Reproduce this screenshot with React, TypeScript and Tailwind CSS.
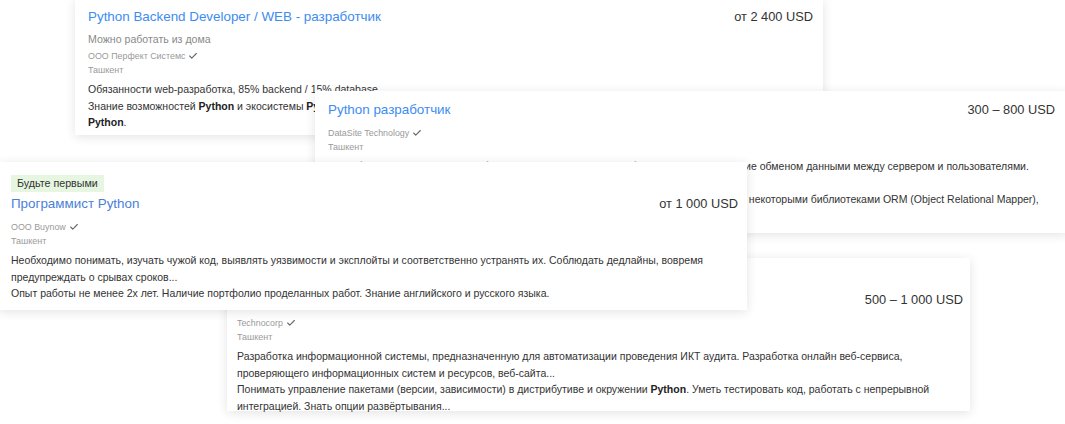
import type { ReactNode } from "react";
import { Check } from "lucide-react";

const FONT = "font-['Liberation_Sans',Arial,sans-serif]";

interface VacancyCardProps {
  className: string;
  title: string;
  titleColor?: string;
  salary: string;
  company: string;
  badge?: boolean;
  remote?: boolean;
  children: ReactNode;
}

function B({ children }: { children: ReactNode }) {
  return <b className="font-bold text-[#222]">{children}</b>;
}

function VacancyCard({
  className,
  title,
  titleColor = "text-[#3d8cf0]",
  salary,
  company,
  badge,
  remote,
  children,
}: VacancyCardProps) {
  return (
    <div className={`absolute bg-white pt-[10px] shadow-[0_2px_10px_rgba(0,0,0,0.11)] ${className}`}>
      {badge && (
        <div className="mt-[3px] w-fit bg-[#e6f6e0] px-[6px] text-[10.7px] leading-[17px] text-[#333]">
          Будьте первыми
        </div>
      )}
      <div className={`flex items-start justify-between ${badge ? "mt-[3px]" : ""}`}>
        <a className={`text-[13.4px] leading-[18px] ${titleColor}`}>{title}</a>
        <span className="whitespace-nowrap text-[12.8px] leading-[18px] text-[#333]">{salary}</span>
      </div>
      {remote && (
        <div className="mt-[5px] text-[10.6px] leading-[16px] text-[#8a8a8a]">Можно работать из дома</div>
      )}
      <div
        className={`${remote ? "mt-[2px]" : "mt-[7px]"} flex items-center gap-[3px] text-[8.9px] leading-[14px] text-[#9a9a9a]`}
      >
        {company}
        <Check size={10} strokeWidth={2.6} className="text-[#666]" />
      </div>
      <div className="text-[9px] leading-[14px] text-[#9a9a9a]">Ташкент</div>
      <div className="mt-[4px] text-[10.5px] leading-[16.5px] text-[#333]">{children}</div>
    </div>
  );
}

export default function App() {
  return (
    <div className={`relative h-[424px] w-[1065px] overflow-hidden bg-white ${FONT}`}>
      <VacancyCard
        className="left-[75px] top-[-2px] w-[748px] pl-[13px] pr-[10px] pb-[4px]"
        title="Python Backend Developer / WEB - разработчик"
        salary="от 2 400 USD"
        company="ООО Перфект Системс"
        remote
      >
        <p>Обязанности web-разработка, 85% backend / 15% database</p>
        <p>
          Знание возможностей <B>Python</B> и экосистемы <B>Python</B> (Django, FastAPI, Celery, SQLAlchemy), опыт
          написания тестов и документации на
          <br />
          <B>Python</B>.
        </p>
      </VacancyCard>

      <VacancyCard
        className="left-[315px] top-[91px] w-[753px] pl-[13px] pr-[13px] pb-[9px]"
        title="Python разработчик"
        salary="300 – 800 USD"
        company="DataSite Technology"
      >
        <p>
          Разработка серверной части веб-сервисов на языке Python, обеспечение и управление обменом данными между
          сервером и пользователями.
          <br />
          Интеграция с внешними сервисами и API.
        </p>
        <p>
          Опыт работы с фреймворками Django/FastAPI, знание SQL и MongoDB, знакомство с некоторыми библиотеками ORM
          (Object Relational Mapper),
          <br />
          навыки работы с Git.
        </p>
      </VacancyCard>

      <VacancyCard
        className="left-[227px] top-[258px] h-[153px] w-[743px] pl-[10px] pr-[7px]"
        title="Junior Python Developer"
        salary="500 – 1 000 USD"
        company="Technocorp"
        badge
      >
        <p>
          Разработка информационной системы, предназначенную для автоматизации проведения ИКТ аудита. Разработка
          онлайн веб-сервиса, проверяющего информационных систем и ресурсов, веб-сайта...
        </p>
        <p>
          Понимать управление пакетами (версии, зависимости) в дистрибутиве и окружении <B>Python</B>. Уметь
          тестировать код, работать с непрерывной интеграцией. Знать опции развёртывания...
        </p>
      </VacancyCard>

      <VacancyCard
        className="left-[-2px] top-[162px] w-[749px] pl-[13px] pr-[9px] pb-[8px]"
        title="Программист Python"
        titleColor="text-[#4a7fd9]"
        salary="от 1 000 USD"
        company="ООО Buynow"
        badge
      >
        <p>
          Необходимо понимать, изучать чужой код, выявлять уязвимости и эксплойты и соответственно устранять их.
          Соблюдать дедлайны, вовремя предупреждать о срывах сроков...
        </p>
        <p>Опыт работы не менее 2х лет. Наличие портфолио проделанных работ. Знание английского и русского языка.</p>
      </VacancyCard>
    </div>
  );
}
